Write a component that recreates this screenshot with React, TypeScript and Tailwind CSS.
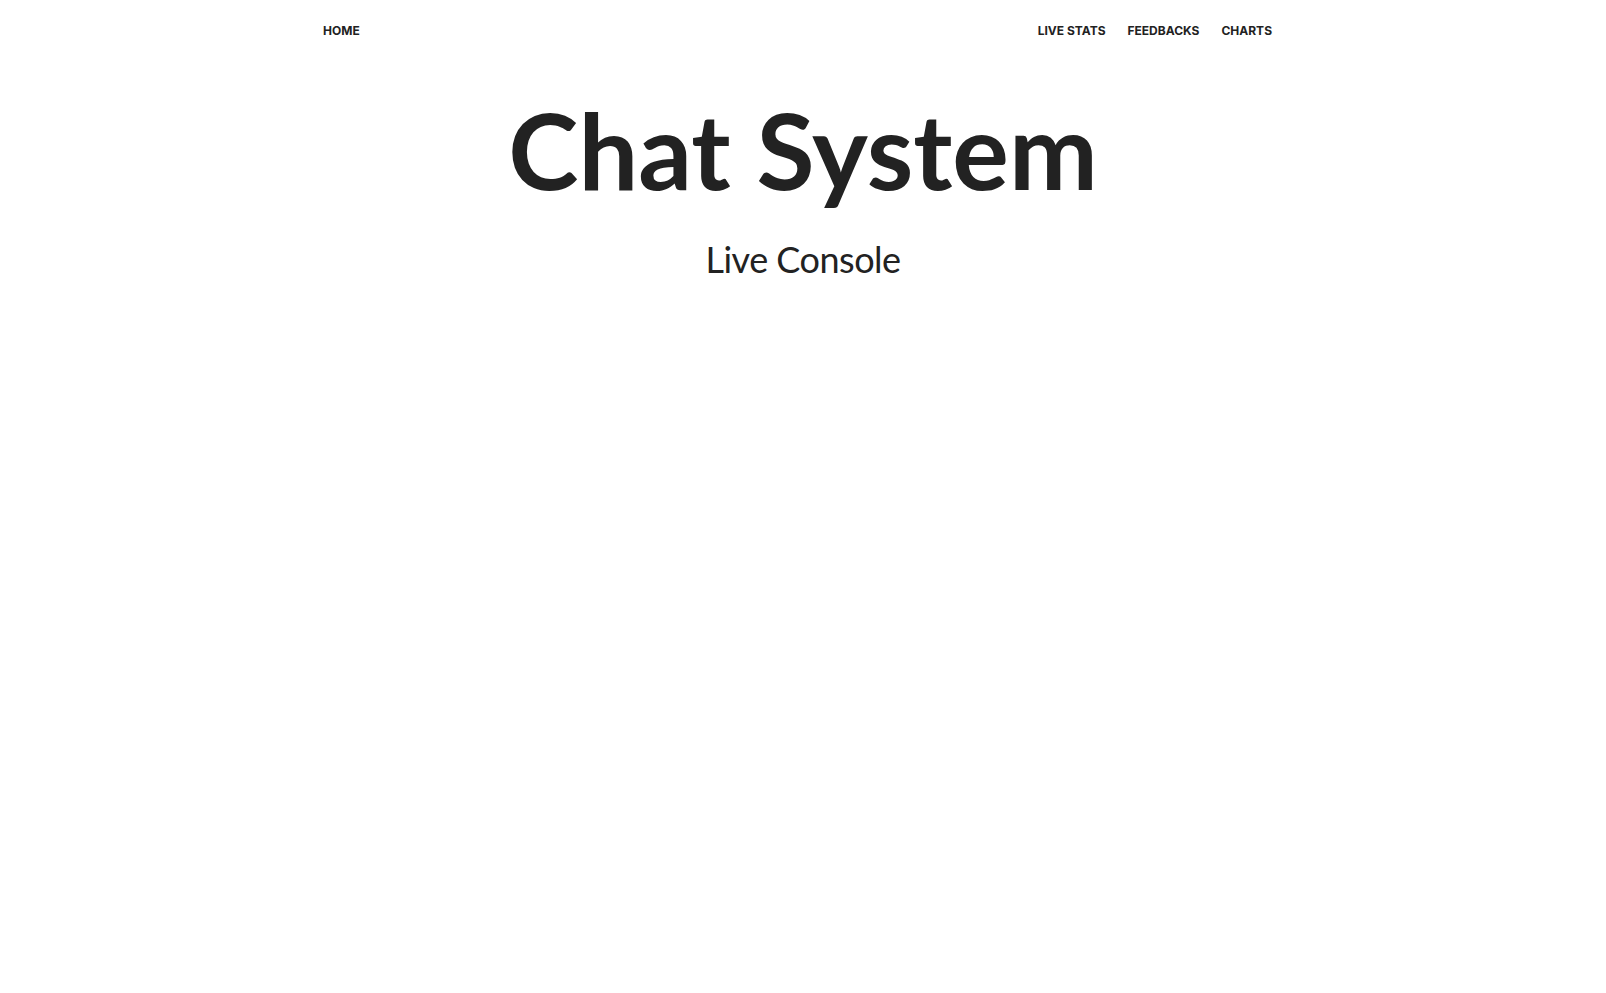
export default function App() {
    return (
        <div className="min-h-screen bg-white text-[#222]">
            {/* Top nav */}
            <nav className="max-w-[960px] mx-auto h-[61px] flex items-center justify-between font-['Inter',sans-serif] text-[12px] font-bold">
                <a href="#" className="leading-none">HOME</a>
                <div className="flex items-center gap-[22px] pr-[11px]">
                    <a href="#" className="leading-none">LIVE STATS</a>
                    <a href="#" className="leading-none">FEEDBACKS</a>
                    <a href="#" className="leading-none">CHARTS</a>
                </div>
            </nav>

            {/* Hero */}
            <header className="text-center font-['Lato',sans-serif]">
                <h1 className="text-[106px] font-bold leading-none mt-[35px]">Chat System</h1>
                <p className="text-[36px] leading-none tracking-[-0.5px] mt-[39px]">Live Console</p>
            </header>
        </div>
    );
}
